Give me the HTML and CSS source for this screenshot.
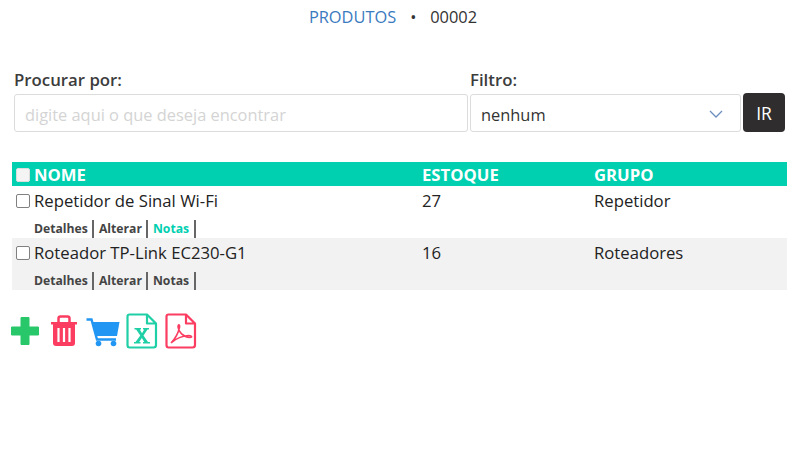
FILE: index.html
```html
<!DOCTYPE html>
<html lang="pt-BR">
<head>
  <meta charset="UTF-8">
  <title>Produtos</title>
  <link rel="stylesheet" href="styles.css">
</head>
<body>
  <div class="topo">
    <a href="#" class="topo-link">PRODUTOS</a>
    <span class="topo-dot">•</span>
    <span>00002</span>
  </div>

  <form class="busca">
    <div class="busca-campo">
      <label class="rotulo">Procurar por:</label>
      <input class="entrada" type="text" placeholder="digite aqui o que deseja encontrar">
    </div>
    <div class="busca-filtro">
      <label class="rotulo">Filtro:</label>
      <div class="selecao">
        <span>nenhum</span>
        <svg class="selecao-seta" width="14" height="8" viewBox="0 0 14 8"><path d="M1 1l6 6 6-6" fill="none" stroke="#6c8ebf" stroke-width="1.3"/></svg>
      </div>
    </div>
    <button class="botao-ir" type="button">IR</button>
  </form>

  <div class="tabela">
    <div class="linha cabecalho">
      <div class="col-nome"><span class="check check-cab"></span>NOME</div>
      <div>ESTOQUE</div>
      <div>GRUPO</div>
    </div>

    <div class="registro">
      <div class="linha">
        <div class="col-nome"><span class="check"></span>Repetidor de Sinal Wi-Fi</div>
        <div>27</div>
        <div>Repetidor</div>
      </div>
      <div class="acoes">
        <a href="#">Detalhes</a><a href="#">Alterar</a><a href="#" class="destaque">Notas</a>
      </div>
    </div>

    <div class="registro registro-par">
      <div class="linha">
        <div class="col-nome"><span class="check"></span>Roteador TP-Link EC230-G1</div>
        <div>16</div>
        <div>Roteadores</div>
      </div>
      <div class="acoes">
        <a href="#">Detalhes</a><a href="#">Alterar</a><a href="#">Notas</a>
      </div>
    </div>
  </div>

  <div class="ferramentas">
    <!-- novo -->
    <svg class="ferramenta-novo" width="30" height="30" viewBox="0 0 30 30"><path d="M11 1.500h8v9.500h9.500v8H19v9.500h-8V19H1.500v-8H11z" fill="#28c76a" stroke="#28c76a" stroke-width="1" stroke-linejoin="round"/></svg>
    <!-- excluir -->
    <svg class="ferramenta-lixo" width="28" height="32" viewBox="0 0 28 32"><path d="M1 7h26v2.500H1z" fill="#fb3d62"/><path d="M8.500 7V3.500Q8.500 1.500 10.500 1.500h7Q19.500 1.500 19.500 3.500V7" fill="none" stroke="#fb3d62" stroke-width="2.500"/><path d="M3 9h22v19q0 3-3 3H6q-3 0-3-3z" fill="#fb3d62"/><path d="M8.500 13v14M14 13v14M19.500 13v14" stroke="#fff" stroke-width="2.200"/></svg>
    <!-- carrinho -->
    <svg width="34" height="32" viewBox="0 0 34 32"><path d="M6 7H33.500L31 21H10z" fill="#2196f3"/><path d="M0.500 4.500H5.500L11 24.500H30" fill="none" stroke="#2196f3" stroke-width="2.400"/><circle cx="12.500" cy="28.500" r="2.800" fill="#2196f3"/><circle cx="27.500" cy="28.500" r="2.800" fill="#2196f3"/></svg>
    <!-- excel -->
    <svg width="32" height="36" viewBox="0 0 32 36"><path d="M3.500 1.500H21L30 10.500V32Q30 34.500 27.500 34.500H3.500Q1.500 34.500 1.500 32V3.500Q1.500 1.500 3.500 1.500zM21 1.500V10.500H30" fill="#fff" stroke="#1fcfa6" stroke-width="2.200" stroke-linejoin="round"/><path d="M8.500 15h6.500v1.500h-1.200l2.200 3.800 2.200-3.800h-1.200V15h6v1.500h-1.500l-4 6 4.500 6.500H24v1.500h-7V29h1.300L15.800 25l-2.600 4h1.300v1.500H8V29h1.500l4.800-6.500-4.200-6H8.500z" fill="#1fcfa6"/></svg>
    <!-- pdf -->
    <svg class="ferramenta-pdf" width="32" height="36" viewBox="0 0 32 36"><path d="M3.500 1.500H21L30 10.500V32Q30 34.500 27.500 34.500H3.500Q1.500 34.500 1.500 32V3.500Q1.500 1.500 3.500 1.500zM21 1.500V10.500H30" fill="#fff" stroke="#fb3d62" stroke-width="2.200" stroke-linejoin="round"/><path d="M6 30C9 27 13 21 14.500 14.500 15 11 13 11 13 14 13.500 19 18 24 25 24.500 27.500 24.500 27 22.500 24 22.500 19 22.500 11 25 6 30z" fill="none" stroke="#fb3d62" stroke-width="1.600"/></svg>
  </div>
</body>
</html>
```

FILE: styles.css
```css
body {
  margin: 0;
  background: #fff;
  color: #333;
  font-family: "Open Sans", "Noto Sans", sans-serif;
  font-size: 16.700px;
}

.topo {
  display: flex;
  justify-content: center;
  align-items: center;
  gap: 9px;
  height: 20px;
  padding-top: 7px;
  padding-right: 14px;
  font-size: 16.400px;
  line-height: 20px;
}

.topo-link {
  color: #3a7abf;
  text-decoration: none;
}

.topo-dot {
  width: 16px;
  text-align: center;
}

.busca {
  display: flex;
  align-items: flex-end;
  margin: 43px 15px 0 14px;
}

.busca-campo {
  width: 454px;
  margin-right: 2px;
}

.busca-filtro {
  width: 271px;
  margin-right: 2px;
}

.rotulo {
  display: block;
  height: 24px;
  line-height: 20px;
  font-weight: 600;
  font-size: 16.800px;
  color: #3c3c3c;
}

.entrada,
.selecao {
  box-sizing: border-box;
  width: 100%;
  height: 38px;
  border: 1px solid #dcdcdc;
  border-radius: 3px;
  font-family: inherit;
  font-size: 16.400px;
  padding: 2px 10px 0;
}

.entrada {
  display: block;
  outline: none;
}

.entrada::placeholder {
  color: #d4d4d4;
}

.selecao {
  display: flex;
  justify-content: space-between;
  align-items: center;
  color: #333;
}

.selecao-seta {
  margin-right: 7px;
}

.botao-ir {
  width: 42px;
  height: 39px;
  border: 0;
  border-radius: 4px;
  background: #2f2d2e;
  color: #fff;
  font-family: inherit;
  font-size: 17.500px;
}

.tabela {
  margin: 30px 13px 0 12px;
}

.linha {
  display: grid;
  grid-template-columns: 410px 172px 1fr;
  align-items: center;
  height: 29px;
  color: #222;
}

.cabecalho {
  box-sizing: border-box;
  height: 24px;
  padding-top: 1px;
  background: #00cfb0;
  color: #fff;
  font-weight: 700;
}

.col-nome {
  display: flex;
  align-items: center;
  gap: 4px;
  padding-left: 4px;
}

.check {
  box-sizing: border-box;
  width: 14px;
  height: 14px;
  border: 1.500px solid #808080;
  border-radius: 2px;
  background: #fff;
}

.check-cab {
  border-color: #ddd;
  background: #f4f4f4;
}

.registro {
  height: 52px;
}

.registro-par {
  background: #f2f2f2;
}

.acoes {
  display: flex;
  align-items: center;
  height: 19px;
  padding: 4px 0 0 22px;
}

.acoes a {
  padding-right: 4.500px;
  margin-right: 4.500px;
  border-right: 2px solid #666;
  color: #444;
  font-size: 12.200px;
  font-weight: 700;
  line-height: 18px;
  text-decoration: none;
}

.acoes .destaque {
  color: #00cfb0;
}

.ferramentas {
  display: flex;
  align-items: center;
  gap: 6px;
  margin: 23px 0 0 10px;
}

.ferramenta-novo {
  margin-right: 4px;
}

.ferramenta-lixo {
  margin-right: 2px;
}

.ferramenta-pdf {
  margin-left: 1px;
}
```
